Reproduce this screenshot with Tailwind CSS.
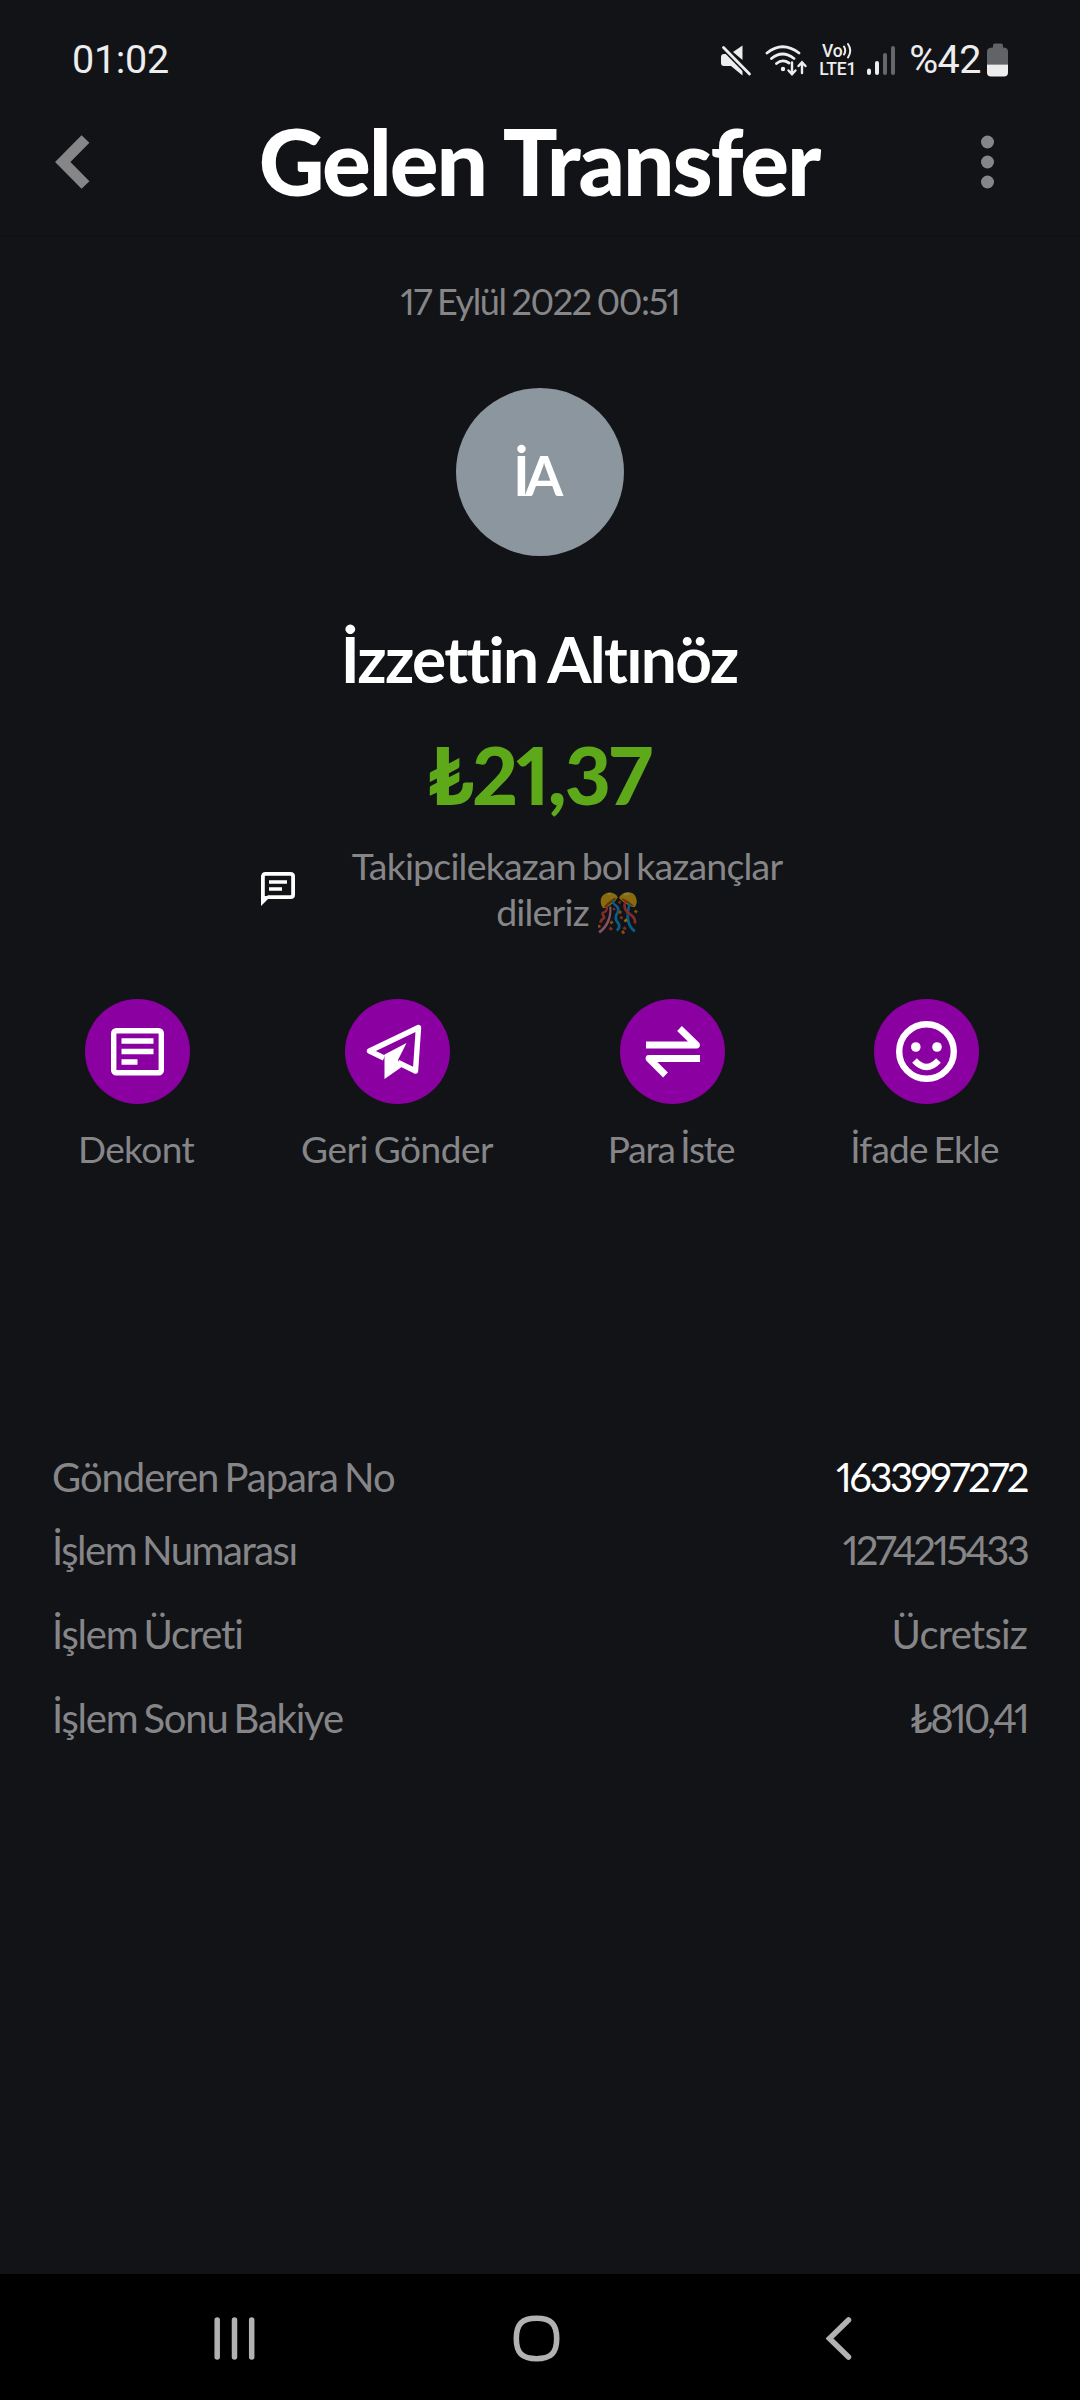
<!DOCTYPE html>
<html lang="tr">
<head>
<meta charset="utf-8">
<title>Gelen Transfer</title>
<script src="https://cdn.jsdelivr.net/npm/@tailwindcss/browser@4"></script>
</head>
<body class="bg-[#121317]">
<div class="flex h-[2400px] w-[1080px] flex-col overflow-hidden bg-[#121317] font-['Lato','Noto_Sans',sans-serif] text-[#868688] proportional-nums">

  <!-- Status bar -->
  <div class="flex h-[84px] items-start justify-between pt-[35px] pr-[72px] pl-[72px] font-['Roboto',sans-serif] text-[#ededee] normal-nums">
    <span class="text-[39.5px] leading-[49px] tracking-[-0.3px]">01:02</span>
    <div class="flex h-[49px] items-center">
      <svg class="mr-[12px] h-[34px] w-[32px]" viewBox="720 43 32 34" fill="#ededee"><path d="M742.500 45.500V60L733 52z"/><path d="M721 57Q721 54 724 54H728.500L742.500 67.500V75.500L731 66H724Q721 66 721 63z"/><path d="M723.500 47.500L749.500 74" stroke="#121317" stroke-width="6"/><path d="M723.500 47.500L749.500 74" stroke="#ededee" stroke-width="2.800" stroke-linecap="round"/></svg>
      <svg class="mr-[10px] h-[34px] w-[44px]" viewBox="763 43 44 34" fill="none" stroke="#ededee" stroke-width="2.800" stroke-linecap="round"><path d="M766 53Q781.500 40.500 798 53M770.500 58.500Q781.500 49.500 793 58.500M775.500 63.500Q781.500 58.500 788 63"/><circle cx="782" cy="69" r="2.200" fill="#ededee" stroke="none"/><path d="M791 62.500V74M787.500 70.500L791 74.300L794.500 70.500M801 73V62.500M797.500 66L801 62.200L804.500 66" stroke-width="2.400"/></svg>
      <div class="mr-[9px] flex w-[39px] flex-col items-center leading-[18px] font-medium">
        <span class="flex items-center text-[17.5px] tracking-[-0.2px]">Vo<svg class="h-[17px] w-[11px]" viewBox="0 0 11 17" fill="none" stroke="#ededee" stroke-width="2" stroke-linecap="round"><path d="M2 4.500Q4.500 8.500 2 12.500M6 2Q10.500 8.500 6 15.500"/></svg></span>
        <span class="text-[17.5px] tracking-[-0.2px]">LTE1</span>
      </div>
      <svg class="mr-[13px] h-[34px] w-[30px]" viewBox="865 43 30 34" stroke-width="4" stroke-linecap="round"><path d="M868 70.500V73M876 63V73" stroke="#ededee"/><path d="M884 55V73M892 48V73" stroke="#66676a"/></svg>
      <span class="mr-[6px] text-[39.5px] tracking-[-0.5px]">%42</span>
      <svg class="h-[34px] w-[21px]" viewBox="987 43.500 21 34"><path d="M993 48V46Q993 44 995 44H1001Q1003 44 1003 46V48Q1008 48 1008 52V65H987V52Q987 48 993 48z" fill="#626366"/><path d="M987 65H1008V73Q1008 77 1004 77H991Q987 77 987 73z" fill="#ededee"/></svg>
    </div>
  </div>

  <!-- App header -->
  <div class="flex h-[151px] items-center justify-between pr-[86px] pl-[55px]">
    <svg class="mt-[4px] h-[54px] w-[35px]" viewBox="0 0 35 54" fill="none" stroke="#868688" stroke-width="11"><path d="M30.500 4L7.800 27L30.500 50"/></svg>
    <h1 class="pt-[2px] pl-[7px] text-[91px] leading-none font-black tracking-[-2.1px] text-white">Gelen Transfer</h1>
    <svg class="mt-[4px] h-[54px] w-[13px]" viewBox="0 0 13 54" fill="#868688"><circle cx="6.500" cy="7" r="6.500"/><circle cx="6.500" cy="27" r="6.500"/><circle cx="6.500" cy="47" r="6.500"/></svg>
  </div>
  <div class="-mb-[2px] h-[2px] bg-[#101115]"></div>

  <!-- Transfer summary -->
  <div class="flex flex-col items-center">
    <p class="mt-[43px] h-[45px] text-[36px] leading-[47px] tracking-[-1.4px] [word-spacing:-2px]">17 Eylül 2022 00:51</p>
    <div class="mt-[65px] flex size-[168px] items-center justify-center rounded-full bg-[#8b969e] pt-[7px] pr-[8px] text-[55px] font-bold tracking-[-4.5px] text-white">İA</div>
    <h2 class="mt-[61px] h-[80px] pr-[2px] text-[64px] leading-[83px] font-bold tracking-[-1.7px] text-white [word-spacing:-2px]">İzzettin Altınöz</h2>
    <p class="mt-[32px] h-[90px] pr-[2px] text-[80px] leading-[90px] font-black tracking-[-1.9px] text-[#5da91a]">₺21,37</p>
  </div>
  <div class="mt-[23px] flex items-center pl-[261px]">
    <svg class="mt-[2px] h-[34px] w-[34px]" viewBox="0 0 34 34" fill="none"><path d="M1.900 29V4.500Q1.900 1.900 4.500 1.900H29.500Q32.100 1.900 32.100 4.500V22.500Q32.100 25.200 29.500 25.200H6.500" stroke="#fff" stroke-width="3.800"/><path d="M0 34V24H10z" fill="#fff"/><path d="M8 10H26M8 17H21" stroke="#fff" stroke-width="3.600"/></svg>
    <p class="-mb-px ml-[48px] w-[448px] pt-px text-center text-[37.5px] leading-[46px] tracking-[-0.8px] [word-spacing:-3px]">Takipcilekazan bol kazançlar<br><span class="pl-[3px]">dileriz</span> <span class="opacity-50">🎊</span></p>
  </div>

  <!-- Actions -->
  <div class="mt-[65px] flex text-[37px] leading-[50px]">
    <div class="ml-[37px] flex w-[201px] flex-col items-center gap-[20px]">
      <svg class="size-[105px]" viewBox="0 0 105 105"><circle cx="52.500" cy="52.500" r="52.500" fill="#8b00a0"/><rect x="28.700" y="31.700" width="47.600" height="42" rx="2.500" fill="none" stroke="#fff" stroke-width="5.400"/><path d="M36.500 42H68.500M36.500 52.500H68.500M36.500 63H52.500" stroke="#fff" stroke-width="5.400"/></svg>
      <span class="pr-[3px] tracking-[-0.6px]">Dekont</span>
    </div>
    <div class="ml-[59px] flex w-[201px] flex-col items-center gap-[20px]">
      <svg class="size-[105px]" viewBox="0 0 105 105"><circle cx="52.500" cy="52.500" r="52.500" fill="#8b00a0"/><path d="M39 59L24.500 52L73.500 28.500L70.500 72L53 63.500" fill="none" stroke="#fff" stroke-width="5.400" stroke-linejoin="round"/><path d="M61.500 44L39.500 55.500V80L56 68.500L53 61z" fill="#fff"/></svg>
      <span class="pr-[1px] tracking-[-0.5px] [word-spacing:-3px]">Geri Gönder</span>
    </div>
    <div class="ml-[74px] flex w-[201px] flex-col items-center gap-[20px]">
      <svg class="size-[105px]" viewBox="0 0 105 105"><circle cx="52.500" cy="52.500" r="52.500" fill="#8b00a0"/><g fill="none" stroke="#fff" stroke-width="6.800" stroke-linejoin="round"><path d="M26 46H76.500L59.500 29.500"/><path d="M80 59.500H29L45.500 76"/></g></svg>
      <span class="pr-[3px] tracking-[-1.1px] [word-spacing:-3px]">Para İste</span>
    </div>
    <div class="ml-[53px] flex w-[201px] flex-col items-center gap-[20px]">
      <svg class="size-[105px]" viewBox="0 0 105 105"><circle cx="52.500" cy="52.500" r="52.500" fill="#8b00a0"/><circle cx="52.500" cy="52.500" r="27.300" fill="none" stroke="#fff" stroke-width="6.400"/><circle cx="41.800" cy="48" r="4.800" fill="#fff"/><circle cx="63" cy="48" r="4.800" fill="#fff"/><path d="M40.500 61.500Q52.500 74.500 64.500 61.500" fill="none" stroke="#fff" stroke-width="6.400"/></svg>
      <span class="pr-[4px] tracking-[-0.75px] [word-spacing:-3px]">İfade Ekle</span>
    </div>
  </div>

  <!-- Details -->
  <dl class="mt-[273px] flex flex-col pr-[53px] pl-[52px] text-[40px] leading-[60px] [word-spacing:-3px]">
    <div class="flex h-[73px] justify-between"><dt class="tracking-[-1.05px]">Gönderen Papara No</dt><dd class="tracking-[-2.5px] text-white">1633997272</dd></div>
    <div class="flex h-[84px] justify-between"><dt class="tracking-[-1.45px]">İşlem Numarası</dt><dd class="tracking-[-2.75px]">1274215433</dd></div>
    <div class="flex h-[84px] justify-between"><dt class="tracking-[-1.2px]">İşlem Ücreti</dt><dd class="tracking-[-0.8px]">Ücretsiz</dd></div>
    <div class="flex h-[84px] justify-between"><dt class="tracking-[-1.2px]">İşlem Sonu Bakiye</dt><dd class="tracking-[-2.8px]">₺810,41</dd></div>
  </dl>

  <!-- System navigation -->
  <div class="mt-auto flex h-[126px] items-center bg-black pt-[3px]">
    <svg class="ml-[214px] h-[47px] w-[41px]" viewBox="0 0 41 47" stroke="#b2b2b2" stroke-width="5.500" stroke-linecap="round"><path d="M3.200 5V42M20.500 5V42M37.700 5V42"/></svg>
    <svg class="ml-[258px] h-[47px] w-[47px]" viewBox="0 0 47 47" fill="none" stroke="#b2b2b2" stroke-width="5.600"><path d="M23.500 3.300C38 3.300 43.700 9 43.700 23.500S38 43.700 23.500 43.700S3.300 38 3.300 23.500S9 3.300 23.500 3.300z"/></svg>
    <svg class="ml-[266px] h-[47px] w-[26px]" viewBox="0 0 26 47" fill="none" stroke="#b2b2b2" stroke-width="5.500" stroke-linecap="round"><path d="M22.500 5L3.500 23.500L22.500 42"/></svg>
  </div>
</div>
</body>
</html>
